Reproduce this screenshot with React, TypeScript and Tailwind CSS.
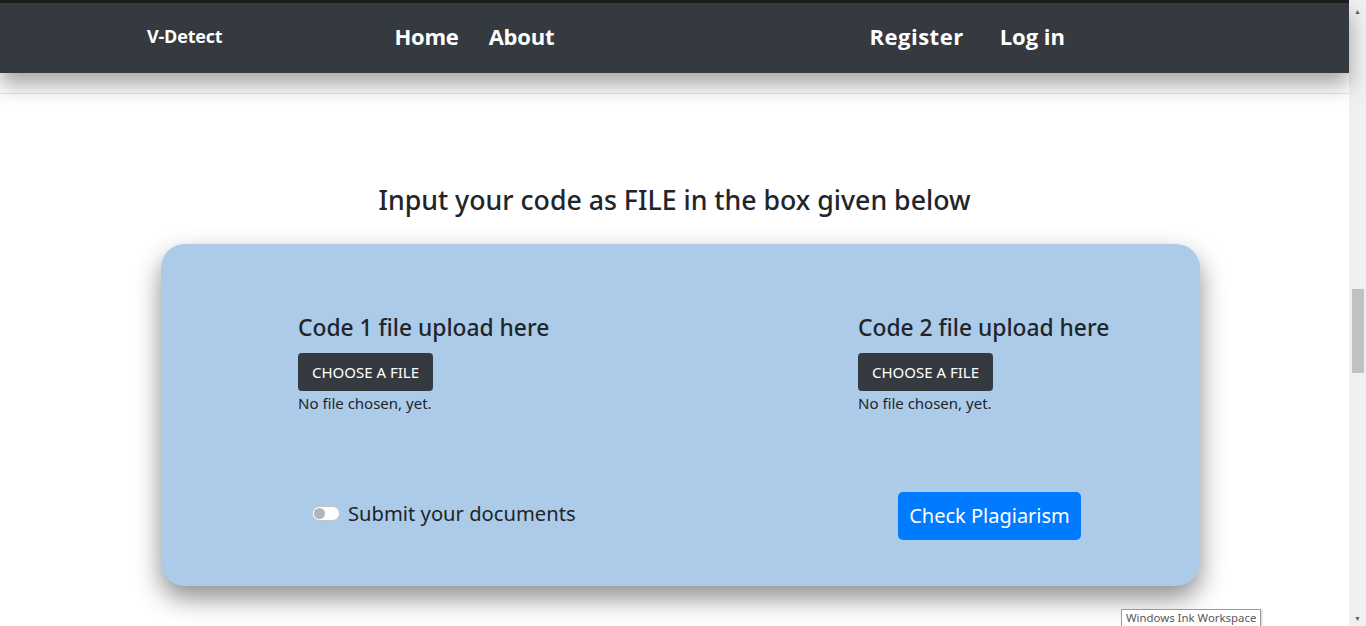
import React from "react"

function NavBar() {
  return (
    <div className="relative z-10 h-[70px] pb-[4px] bg-[#343a40] shadow-[0_12px_20px_rgba(0,0,0,0.35)] flex items-center font-['Open_Sans',sans-serif] text-white font-bold">
      <div className="w-[147px]" />
      <span className="text-[18px] tracking-[-0.2px]">V-Detect</span>
      <div className="w-[172px]" />
      <a className="text-[22px] tracking-[-0.2px]">Home</a>
      <a className="ml-[30px] text-[22px] tracking-[-0.2px]">About</a>
      <div className="flex-1" />
      <a className="text-[22px] tracking-[0.5px]">Register</a>
      <a className="ml-[36px] text-[22px] tracking-[0px]">Log in</a>
      <div className="w-[284px]" />
    </div>
  )
}

function FileUpload({ label }: { label: string }) {
  return (
    <div className="flex flex-col items-start">
      <h3 className="text-[22.8px] font-medium text-[#212529] leading-[28px]">{label}</h3>
      <button className="mt-[11px] h-[38px] px-[14px] rounded-[4px] bg-[#343a40] text-white text-[15px] uppercase">
        Choose a file
      </button>
      <p className="mt-[1px] text-[15px] text-[#212529] leading-[22px]">No file chosen, yet.</p>
    </div>
  )
}

export default function App() {
  return (
    <div className="flex w-[1366px] h-[626px] overflow-hidden bg-white font-['Noto_Sans',sans-serif]">
      <div className="w-[1349px] flex flex-col">
        <div className="h-[3px] bg-[#1e1e1e]" />
        <NavBar />
        <div className="mt-[20px] border-t border-[#e6e6e6]" />

        <h2 className="mt-[89px] text-center text-[26.7px] font-medium text-[#212529] leading-[34px]">
          Input your code as FILE in the box given below
        </h2>

        <div className="ml-[161px] mt-[27px] w-[1039px] h-[342px] rounded-[24px] bg-[#abcbe9] shadow-[0_12px_26px_rgba(0,0,0,0.45)] flex flex-col">
          <div className="flex mt-[70px]">
            <div className="ml-[137px] w-[560px]">
              <FileUpload label="Code 1 file upload here" />
            </div>
            <FileUpload label="Code 2 file upload here" />
          </div>
          <div className="flex items-center mt-[78px]">
            <div className="ml-[151px] mb-[5px] flex items-center gap-[8px]">
              <span className="relative w-[28px] h-[15px] rounded-full bg-white border border-[#c4c4c4]">
                <span className="absolute left-[1px] top-[1px] w-[11px] h-[11px] rounded-full bg-[#adb5bd]" />
              </span>
              <span className="text-[20.2px] text-[#212529]">Submit your documents</span>
            </div>
            <div className="flex-1" />
            <button className="mr-[119px] h-[48px] w-[183px] rounded-[5px] bg-[#007bff] text-white text-[20px]">
              Check Plagiarism
            </button>
          </div>
        </div>
      </div>

      {/* scrollbar */}
      <div className="relative w-[17px] bg-[#f0f0f0] flex flex-col items-center">
        <span className="mt-[8px] text-[7px] text-[#606060] leading-none">▲</span>
        <div className="mt-[274px] w-[12px] h-[84px] bg-[#c1c1c1]" />
        <div className="flex-1" />
        <span className="mb-[4px] text-[7px] text-[#606060] leading-none">▼</span>
      </div>

      <div className="absolute left-[1121px] top-[609px] h-[18px] px-[4px] border border-[#9a9a9a] bg-white text-[11.4px] leading-[16px] text-[#575757] font-['Noto_Sans',sans-serif] shadow-[1px_1px_2px_rgba(0,0,0,0.2)]">
        Windows Ink Workspace
      </div>
    </div>
  )
}
